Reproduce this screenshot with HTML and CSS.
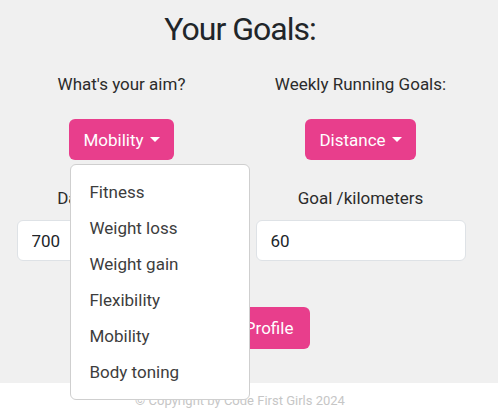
FILE: index.html
```html
<!DOCTYPE html>
<html lang="en">
<head>
<meta charset="utf-8">
<title>Your Goals</title>
<link rel="stylesheet" href="styles.css">
</head>
<body>
<main class="page">
  <h1 class="title">Your Goals:</h1>
  <div class="goals">
    <div class="goal-col">
      <p class="label">What's your aim?</p>
      <div class="dropdown">
        <button class="btn btn-toggle" type="button">Mobility<span class="caret"></span></button>
        <ul class="menu">
          <li class="menu-item">Fitness</li>
          <li class="menu-item">Weight loss</li>
          <li class="menu-item">Weight gain</li>
          <li class="menu-item">Flexibility</li>
          <li class="menu-item">Mobility</li>
          <li class="menu-item">Body toning</li>
        </ul>
      </div>
      <p class="label label-low">Daily calorie goal</p>
      <input class="field" type="text" value="700">
    </div>
    <div class="goal-col">
      <p class="label">Weekly Running Goals:</p>
      <div class="dropdown">
        <button class="btn btn-toggle" type="button">Distance<span class="caret"></span></button>
      </div>
      <p class="label label-low">Goal /kilometers</p>
      <input class="field" type="text" value="60">
    </div>
  </div>
  <div class="actions">
    <button class="btn btn-save" type="button">Update Profile</button>
  </div>
</main>
<footer class="footer">
  <p class="footer-text">© Copyright by Code First Girls 2024</p>
</footer>
</body>
</html>
```
FILE: styles.css
```css
* { box-sizing: border-box; }
html, body { margin: 0; padding: 0; }
body {
  background: #ffffff;
  font-family: Roboto, "Liberation Sans", sans-serif;
  color: #212529;
  width: 498px;
  height: 418px;
  overflow: hidden;
}
.page {
  background: #f0f0f0;
  width: 100%;
  height: 383px;
  padding-top: 10px;
}
.title {
  width: 480px;
  margin: 0;
  text-align: center;
  font-size: 32px;
  line-height: 38px;
  font-weight: 400;
  letter-spacing: -1px;
  color: #212529;
}
.goals {
  width: 480px;
  padding-left: 2px;
  display: grid;
  grid-template-columns: 1fr 1fr;
}
.goal-col {
  display: flex;
  flex-direction: column;
  align-items: center;
}
.label {
  margin: 24px 0 0;
  font-size: 17px;
  line-height: 24px;
  color: #2b2b2b;
  white-space: nowrap;
}
.label-low { margin-top: 26px; }
.dropdown {
  position: relative;
  margin-top: 23px;
}
.btn {
  display: inline-flex;
  align-items: center;
  border: none;
  background: #e83e8c;
  color: #ffffff;
  font-family: inherit;
  font-size: 17px;
  border-radius: 6px;
  padding: 0 14px;
  cursor: pointer;
}
.btn-toggle { height: 41px; }
.caret {
  display: inline-block;
  margin-left: 6px;
  width: 0;
  height: 0;
  border-top: 5px solid #ffffff;
  border-left: 5px solid transparent;
  border-right: 5px solid transparent;
}
.menu {
  position: absolute;
  top: calc(100% + 4px);
  left: 1px;
  z-index: 10;
  width: 180px;
  margin: 0;
  padding: 9px 0;
  list-style: none;
  background: #ffffff;
  border: 1px solid #cfcfcf;
  border-radius: 6px;
}
.menu-item {
  padding: 0 18px;
  line-height: 36px;
  font-size: 17px;
  color: #3d3d3d;
  white-space: nowrap;
}
.field {
  margin-top: 10px;
  width: 210px;
  height: 41px;
  border: 1px solid #dee2e6;
  border-radius: 6px;
  background: #ffffff;
  padding: 0 14px;
  font-family: inherit;
  font-size: 17px;
  color: #212529;
}
.actions {
  width: 480px;
  display: flex;
  justify-content: center;
  margin-top: 46px;
}
.btn-save {
  height: 42px;
  padding: 0 17px;
}
.footer {
  height: 35px;
  background: #ffffff;
}
.footer-text {
  width: 480px;
  margin: 0;
  text-align: center;
  font-size: 13px;
  line-height: 35px;
  color: #c6c6c6;
}
```
